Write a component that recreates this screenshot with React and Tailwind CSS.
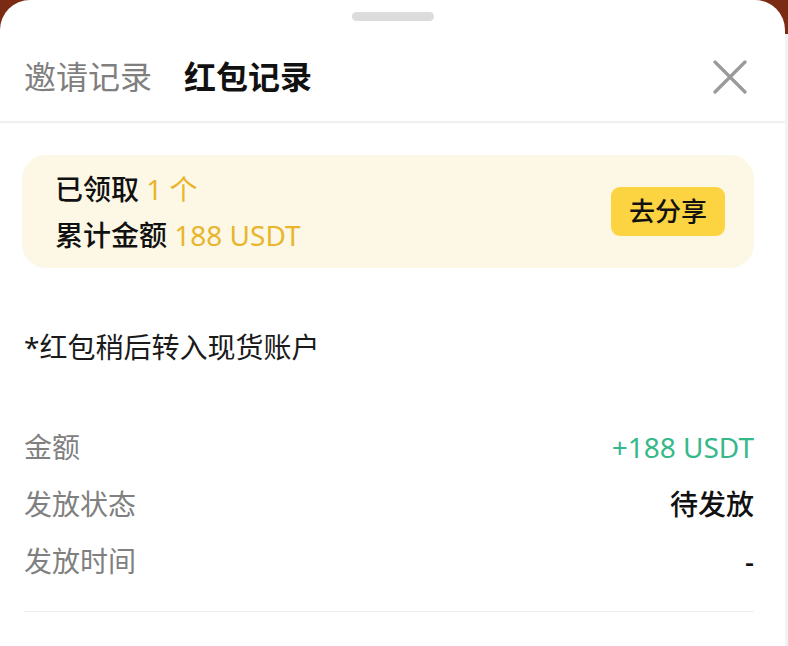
const rows = [
  { label: "金额", value: "+188 USDT", tone: "text-[#35b98a]" },
  { label: "发放状态", value: "待发放", tone: "text-[#111] font-medium" },
  { label: "发放时间", value: "-", tone: "text-[#111] font-medium" },
];

export default function App() {
  return (
    <div
      className="h-[646px] w-[788px] overflow-hidden bg-[linear-gradient(#7b2b13_0_34px,#f3f3f3_34px)]"
      style={{ fontFamily: '"Noto Sans", "Noto Sans CJK SC", sans-serif' }}
    >
      <div className="h-full w-[785px] rounded-t-[30px] bg-white">
        {/* drag handle */}
        <div className="flex h-[32px] items-start justify-center pt-[12px]">
          <div className="h-[9px] w-[82px] rounded-full bg-[#dcdcdc]" />
        </div>

        {/* tabs */}
        <div className="flex h-[91px] items-center justify-between border-b-2 border-[#f0f0f0] pl-[24px] pr-[38px]">
          <div className="flex items-center gap-[32px] text-[32px] leading-[40px]">
            <span className="text-[#7f7f7f]">邀请记录</span>
            <span className="font-bold text-[#111]">红包记录</span>
          </div>
          <svg width="34" height="34" viewBox="0 0 34 34" className="text-[#9a9a9a]">
            <path d="M2 2L32 32M32 2L2 32" stroke="currentColor" strokeWidth="3.2" strokeLinecap="round" />
          </svg>
        </div>

        <div className="pl-[24px] pr-[31px]">
          {/* summary card */}
          <div className="-ml-[2px] mt-[32px] flex h-[113px] items-center justify-between rounded-[24px] bg-[#fdf8e6] pl-[33px] pr-[29px]">
            <div className="text-[28px] font-medium leading-[46px] text-[#111]">
              <div>
                已领取 <span className="font-normal text-[#e8b52c]">1 个</span>
              </div>
              <div>
                累计金额 <span className="font-normal text-[#e8b52c]">188 USDT</span>
              </div>
            </div>
            <button className="flex h-[49px] w-[114px] items-center justify-center rounded-[9px] bg-[#fcd340] text-[26px] font-medium text-[#111]">
              去分享
            </button>
          </div>

          <div className="mt-[59px] text-[28px] leading-[40px] text-[#1a1a1a]">*红包稍后转入现货账户</div>

          <div className="mt-[52px]">
            {rows.map((r) => (
              <div key={r.label} className="flex items-center justify-between text-[28px] leading-[57px]">
                <span className="text-[#808080]">{r.label}</span>
                <span className={r.tone}>{r.value}</span>
              </div>
            ))}
          </div>

          <div className="mt-[21px] h-px bg-[#eeeeee]" />
        </div>
      </div>
    </div>
  );
}
